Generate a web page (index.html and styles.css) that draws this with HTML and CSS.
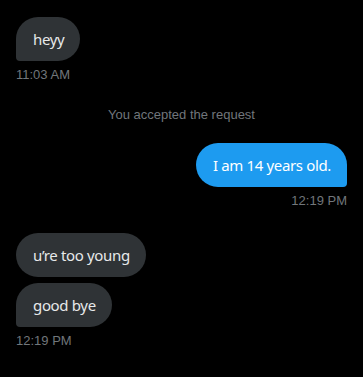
FILE: index.html
```html
<!DOCTYPE html>
<html>
<head>
<meta charset="utf-8">
<link rel="stylesheet" href="styles.css">
</head>
<body>
<div class="chat">
  <div class="row left">
    <div class="bubble recv tail-left">heyy</div>
  </div>
  <div class="time left">11:03 AM</div>

  <div class="system">You accepted the request</div>

  <div class="row right gap-top">
    <div class="bubble sent tail-right">I am 14 years old.</div>
  </div>
  <div class="time right">12:19 PM</div>

  <div class="row left gap-top2">
    <div class="bubble recv">u’re too young</div>
  </div>
  <div class="row left gap-small">
    <div class="bubble recv tail-left">good bye</div>
  </div>
  <div class="time left">12:19 PM</div>
</div>
</body>
</html>
```
FILE: styles.css
```css
html, body {
  margin: 0;
  background: #000;
}
.chat {
  display: flex;
  flex-direction: column;
  padding: 17px 16px;
  font-family: "Noto Sans", "Open Sans", sans-serif;
}
.row {
  display: flex;
}
.row.left { justify-content: flex-start; }
.row.right { justify-content: flex-end; }
.bubble {
  font-size: 15px;
  line-height: 20px;
  letter-spacing: -0.35px;
  padding: 12px 16px 12px 17px;
  border-radius: 22px;
  color: #e7e9ea;
}
.recv { background: #2f3336; }
.sent { background: #1d9bf0; color: #fff; }
.tail-left { border-bottom-left-radius: 4px; }
.tail-right { border-bottom-right-radius: 4px; }
.time {
  font-family: "Liberation Sans", Arial, sans-serif;
  font-size: 13px;
  line-height: 16px;
  color: #71767b;
  margin-top: 6px;
}
.time.right { text-align: right; }
.system {
  font-family: "Liberation Sans", Arial, sans-serif;
  font-size: 13px;
  line-height: 16px;
  color: #71767b;
  text-align: center;
  margin-top: 24px;
}
.gap-top { margin-top: 20px; }
.gap-top2 { margin-top: 24px; }
.gap-small { margin-top: 6px; }
```
